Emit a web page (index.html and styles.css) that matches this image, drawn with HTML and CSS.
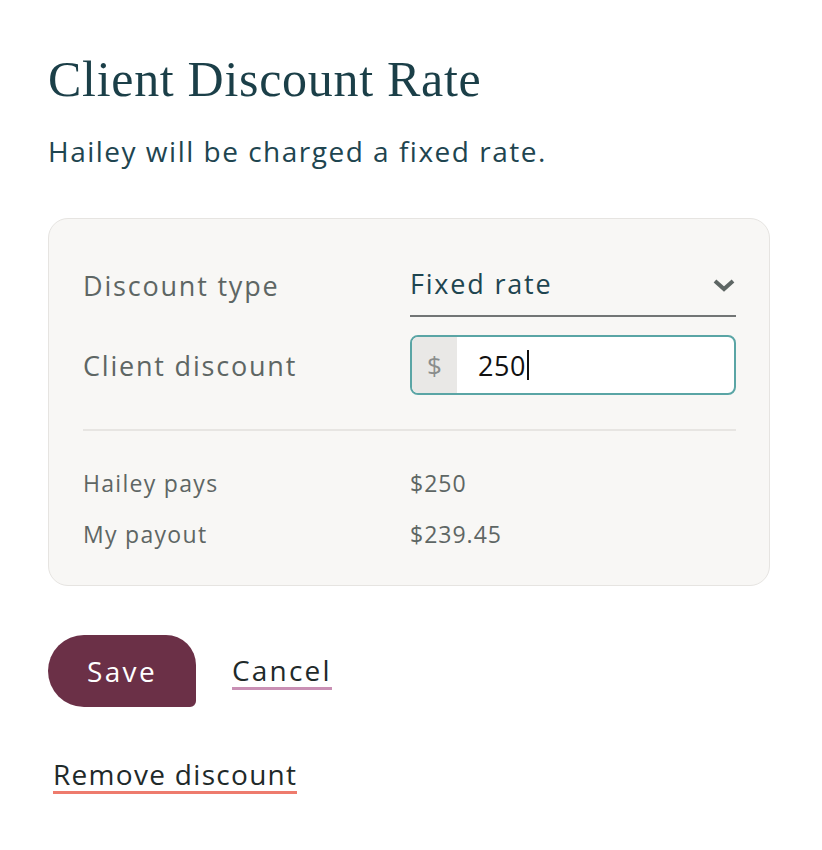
FILE: index.html
```html
<!DOCTYPE html>
<html>
<head>
<meta charset="utf-8">
<link rel="stylesheet" href="styles.css">
</head>
<body>
<div class="page">
  <h1 class="title">Client Discount Rate</h1>
  <p class="subtitle">Hailey will be charged a fixed rate.</p>
  <div class="card">
    <div class="row row-type">
      <div class="label">Discount type</div>
      <div class="select">
        <span class="select-value">Fixed rate</span>
        <svg class="chev" width="24" height="16" viewBox="0 0 24 16"><path d="M3 4 L12 12 L21 4" fill="none" stroke="#5e6664" stroke-width="4"/></svg>
      </div>
    </div>
    <div class="row row-discount">
      <div class="label">Client discount</div>
      <div class="input">
        <span class="prefix">$</span>
        <span class="value">250<span class="caret"></span></span>
      </div>
    </div>
    <div class="divider"></div>
    <div class="summary">
      <div class="srow"><span class="slabel">Hailey pays</span><span class="sval">$250</span></div>
      <div class="srow"><span class="slabel">My payout</span><span class="sval">$239.45</span></div>
    </div>
  </div>
  <div class="actions">
    <button class="save">Save</button>
    <a class="cancel">Cancel</a>
  </div>
  <a class="remove">Remove discount</a>
</div>
</body>
</html>
```
FILE: styles.css
```css
* { box-sizing: border-box; }
body { margin: 0; background: #fff; font-family: "Open Sans", "Noto Sans", sans-serif; }
.page { padding: 52px 0 0 48px; width: 770px; }
.title {
  margin: 0;
  font-family: "Liberation Serif", serif;
  font-weight: 400;
  font-size: 50px;
  line-height: 54px;
  letter-spacing: 0.7px;
  color: #1b3f48;
}
.subtitle {
  margin: 29px 0 0 0;
  font-size: 28px;
  line-height: 32px;
  letter-spacing: 1.5px;
  color: #1e4550;
}
.card {
  margin-top: 51px;
  width: 722px;
  background: #f8f7f5;
  border: 1.5px solid #e6e4e1;
  border-radius: 20px;
  padding: 44px 33px 27px 34px;
}
.row { display: flex; align-items: center; }
.label { width: 327px; font-size: 27px; letter-spacing: 1.8px; color: #5e6664; }
.row-type { height: 54px; align-items: flex-start; }
.row-type .label { padding-top: 4px; }
.select {
  flex: 1;
  height: 54px;
  border-bottom: 2px solid #727575;
  display: flex;
  justify-content: space-between;
  align-items: flex-start;
  padding-top: 2px;
}
.select-value { font-size: 27px; letter-spacing: 1.8px; color: #1e4550; }
.chev { margin-top: 12px; margin-right: 0; }
.row-discount { margin-top: 18px; }
.input {
  flex: 1;
  height: 60px;
  border: 2px solid #5aa5a5;
  border-radius: 8px;
  background: #fff;
  display: flex;
  overflow: hidden;
}
.prefix {
  width: 45px;
  background: #e9e8e6;
  color: #8a8d8c;
  font-size: 26px;
  display: flex;
  align-items: center;
  justify-content: center;
}
.value {
  padding-left: 21px;
  font-size: 27px;
  letter-spacing: 0.5px;
  color: #111;
  display: flex;
  align-items: center;
}
.caret { display: inline-block; width: 2px; height: 30px; background: #111; margin-left: 1px; }
.divider { margin-top: 34px; height: 2px; background: #e7e5e2; }
.summary { margin-top: 37px; }
.srow { display: flex; }
.srow:first-child { height: 38px; }
.srow:last-child { height: 52px; padding-top: 13px; }
.slabel { width: 327px; font-size: 23px; letter-spacing: 1.3px; color: #5e6664; line-height: 30px; }
.sval { font-size: 23px; letter-spacing: 1px; color: #5e6664; line-height: 30px; }
.actions { margin-top: 49px; display: flex; align-items: center; }
.save {
  width: 148px;
  height: 72px;
  border: none;
  background: #6b3047;
  color: #fff;
  font-family: "Open Sans", "Noto Sans", sans-serif;
  font-size: 28px;
  font-weight: 500;
  letter-spacing: 2.4px;
  border-radius: 36px 30px 6px 36px;
  padding: 0;
}
.cancel {
  margin-left: 36px;
  font-size: 28px;
  font-weight: 500;
  letter-spacing: 2.2px;
  color: #1f2a2a;
  border-bottom: 3px solid #c98fb4;
  line-height: 34px;
  padding-bottom: 0;
}
.remove {
  display: inline-block;
  margin-top: 50px;
  margin-left: 5px;
  font-size: 28px;
  font-weight: 500;
  letter-spacing: 1.3px;
  color: #1f2a2a;
  border-bottom: 3px solid #ee7b6d;
  line-height: 34px;
  padding-bottom: 0;
}
```
